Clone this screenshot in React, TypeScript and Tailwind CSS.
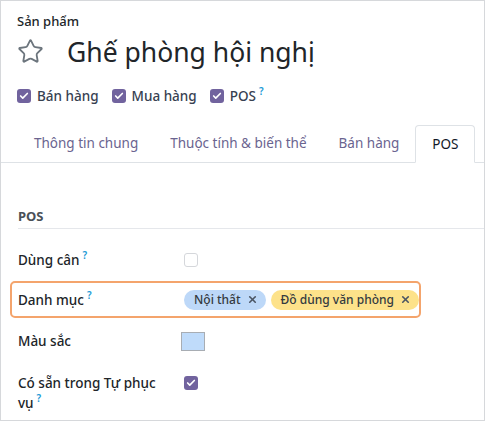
import { Star, Check, X } from "lucide-react";

const font = { fontFamily: '"Noto Sans", "Open Sans", sans-serif' };

function Box({ checked }: { checked: boolean }) {
  return checked ? (
    <span className="flex h-[14px] w-[14px] items-center justify-center rounded-[3px] bg-[#71639e]">
      <Check className="h-[10px] w-[10px] text-white" strokeWidth={4} />
    </span>
  ) : (
    <span className="h-[14px] w-[14px] rounded-[3px] border border-[#d5d7db] bg-white" />
  );
}

function Help() {
  return <span className="relative -top-[6px] ml-[3px] text-[10px] font-semibold text-[#1c9ad6]">?</span>;
}

function Tag({ label, color }: { label: string; color: string }) {
  return (
    <span className={`flex h-[20px] items-center gap-[6px] whitespace-nowrap rounded-full pl-[10px] pr-[8px] text-[12px] text-[#343a40] ${color}`}>
      {label}
      <X className="h-[11px] w-[11px] text-[#4b5563]" strokeWidth={3.5} />
    </span>
  );
}

export default function App() {
  const tabs = ["Thông tin chung", "Thuộc tính & biến thể", "Bán hàng"];
  return (
    <div style={font} className="h-[421px] w-[486px] bg-white">
      <div className="flex h-[421px] w-[485px] flex-col border border-[#d6d8db] text-[#212529]">
        <div className="pl-[16px] pt-[11px] text-[13px] font-medium">Sản phẩm</div>
        <div className="flex items-center pl-[16px] pt-[2px]">
          <Star className="h-[27px] w-[27px] text-[#6c757d]" strokeWidth={1.6} />
          <span className="ml-[23px] whitespace-nowrap text-[26.5px] leading-[36px]">Ghế phòng hội nghị</span>
        </div>
        <div className="mt-[16px] flex items-center gap-[13px] pl-[16px] text-[13.5px] font-medium text-[#374151]">
          <span className="flex items-center gap-[6px]"><Box checked />Bán hàng</span>
          <span className="flex items-center gap-[6px]"><Box checked />Mua hàng</span>
          <span className="flex items-center gap-[6px]"><Box checked /><span>POS<Help /></span></span>
        </div>
        <div className="mt-[19px] flex h-[38px] border-b border-[#dee2e6] pl-[17px] text-[13.5px]">
          {tabs.map((t) => (
            <span key={t} className="flex items-center whitespace-nowrap border border-transparent px-[15px] text-[#6a648f]">{t}</span>
          ))}
          <span className="-mb-px flex items-center rounded-t-[4px] border border-b-white border-[#dee2e6] bg-white px-[16px] text-[#111827]">POS</span>
        </div>
        <div className="ml-[17px] mt-[44px] border-b border-[#e5e7eb] pb-[2px] text-[13px] font-bold text-[#495057]">POS</div>
        <div className="flex flex-col pt-[17px] text-[13.5px] font-medium">
          <div className="flex h-[28px] items-center pl-[17px]">
            <span className="w-[166px]">Dùng cân<Help /></span>
            <Box checked={false} />
          </div>
          <div className="ml-[9px] mt-[7px] flex h-[37px] w-[411px] items-center rounded-[5px] border-2 border-[#f4a46c] pl-[6px]">
            <span className="w-[166px]">Danh mục<Help /></span>
            <div className="flex gap-[5px]">
              <Tag label="Nội thất" color="bg-[#bdd8f8]" />
              <Tag label="Đồ dùng văn phòng" color="bg-[#fde28a]" />
            </div>
          </div>
          <div className="mt-[6px] flex h-[34px] items-center pl-[17px]">
            <span className="w-[163px]">Màu sắc</span>
            <span className="h-[19px] w-[24px] border border-[#a8adb3] bg-[#bfdbfa]" />
          </div>
          <div className="mt-[15px] flex pl-[17px]">
            <span className="w-[166px] pr-[8px] leading-[20px]">Có sẵn trong Tự phục vụ<Help /></span>
            <span className="pt-[3px]"><Box checked /></span>
          </div>
        </div>
      </div>
    </div>
  );
}
